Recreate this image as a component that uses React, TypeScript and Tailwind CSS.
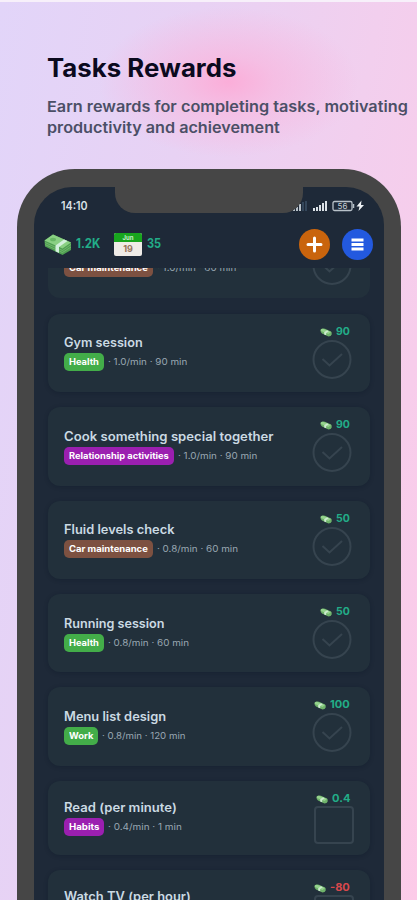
import React from 'react';
import clsx from 'clsx';

interface Task {
  title: string;
  titleClass: string;
  tag: string;
  tagClass: string;
  rate: string;
  rateClass: string;
  reward: string;
  rewardClass: string;
  card: string;
  shape: 'check' | 'box';
}

const tasks: Task[] = [
  { title: 'Gym session', titleClass: 'w-[79px]', tag: 'Health', tagClass: 'w-10 bg-[#43ad49]', rate: '· 1.0/min · 90 min', rateClass: 'w-[79px]', reward: '90', rewardClass: 'w-[14px]', card: 'h-[78px] pt-[20px] mb-[15px]', shape: 'check' },
  { title: 'Cook something special together', titleClass: 'w-[210px]', tag: 'Relationship activities', tagClass: 'w-[110px] bg-[#9b1fb0]', rate: '· 1.0/min · 90 min', rateClass: 'w-[79px]', reward: '90', rewardClass: 'w-[14px]', card: 'h-[79px] pt-[21px] mb-[15px]', shape: 'check' },
  { title: 'Fluid levels check', titleClass: 'w-[110px]', tag: 'Car maintenance', tagClass: 'w-[89px] bg-[#7d5141]', rate: '· 0.8/min · 60 min', rateClass: 'w-[81px]', reward: '50', rewardClass: 'w-[14px]', card: 'h-[78px] pt-[20px] mb-[15px]', shape: 'check' },
  { title: 'Running session', titleClass: 'w-[101px]', tag: 'Health', tagClass: 'w-10 bg-[#43ad49]', rate: '· 0.8/min · 60 min', rateClass: 'w-[81px]', reward: '50', rewardClass: 'w-[14px]', card: 'h-[78px] pt-[21px] mb-[15px]', shape: 'check' },
  { title: 'Menu list design', titleClass: 'w-[102px]', tag: 'Work', tagClass: 'w-[34px] bg-[#43ad49]', rate: '· 0.8/min · 120 min', rateClass: 'w-[84px]', reward: '100', rewardClass: 'w-[20px]', card: 'h-[79px] pt-[21px] mb-[15px]', shape: 'check' },
  { title: 'Read (per minute)', titleClass: 'w-[113px]', tag: 'Habits', tagClass: 'w-10 bg-[#9b1fb0]', rate: '· 0.4/min · 1 min', rateClass: 'w-[74px]', reward: '0.4', rewardClass: 'w-[18px]', card: 'h-[74px] pt-[18px] mb-[15px]', shape: 'box' },
  { title: 'Watch TV (per hour)', titleClass: 'w-[127px]', tag: 'Habits', tagClass: 'w-10 bg-[#9b1fb0]', rate: '· 0.4/min · 60 min', rateClass: 'w-[81px]', reward: '-80', rewardClass: 'w-[20px]', card: 'h-[78px] pt-[18px]', shape: 'box' },
];

// Stretches a line of text over the full width of its box
function Fit({ text, className }: { text: string; className: string }) {
  const ref = React.useRef<HTMLSpanElement>(null);
  const [scale, setScale] = React.useState(1);

  React.useLayoutEffect(() => {
    const el = ref.current;
    if (el && el.parentElement) {
      setScale(el.parentElement.clientWidth / el.offsetWidth);
    }
  }, [text]);

  return (
    <span className={clsx('block whitespace-nowrap', className)}>
      <span ref={ref} className="inline-block origin-left" style={{ transform: `scaleX(${scale})` }}>
        {text}
      </span>
    </span>
  );
}

function Cash() {
  return (
    <svg viewBox="0 0 28 23" className="w-7 h-[23px]">
      <path d="M.500 7.500 9 1.500 27 9.500V17L18.500 22 1 13.500Z" fill="#4f9f52" />
      <path d="M.500 7.500 9 1.500 27 9.500 18.500 15.500Z" fill="#8ad083" />
      <path d="M1 9.500 18.500 17.500 27 11.500M1 11.500 18.500 19.500 27 14" stroke="#78bd71" strokeWidth=".8" fill="none" />
      <path d="M11.500 12.500 20 6.500 23.500 8 15 14V20L11.500 18.200Z" fill="#d3f0dc" />
      <ellipse cx="9" cy="6.500" rx="3" ry="1.800" fill="#68b765" />
    </svg>
  );
}

function SmallCash() {
  return (
    <svg viewBox="0 0 12 9" className="w-3 h-[9px]">
      <path d="M.500 2Q.500.500 3 .500L5 .800 11 3.500Q12 4 11.700 6.500 11 8.500 8.500 8.500L2 5.500Q.300 4.500.500 2Z" fill="#6fb36b" />
      <path d="M.700 2Q1 .700 3 .700L11 4 8.500 6 1 3Z" fill="#95d38d" />
      <path d="M4.200 4.200 7 2.300 8.800 3.200 6.200 5V7.300L4.200 6.400Z" fill="#cdebd0" />
    </svg>
  );
}

function Calendar() {
  return (
    <div className="w-7 h-[23px] rounded-[2px] overflow-hidden bg-[#efebe7] text-center font-bold">
      <div className="h-[9px] bg-[#18a51e] text-[#c8edc9] text-[6px] leading-[9px]">Jun</div>
      <div className="text-[9px] leading-[14px] text-[#97735b]">19</div>
    </div>
  );
}

function CheckCircle() {
  return (
    <svg viewBox="0 0 40 40" className="w-10 h-10" fill="none" stroke="#36444f" strokeWidth="2">
      <circle cx="20" cy="19.500" r="18.500" />
      <path d="M10.500 19 17.500 25.500 30 14" />
    </svg>
  );
}

function TaskCard({ task }: { task: Task }) {
  return (
    <div className={clsx('relative rounded-xl bg-[#22303b] pl-4 shadow-[0_1px_4px_rgba(10,20,35,0.3)]', task.card)}>
      <Fit text={task.title} className={clsx('mb-px text-[12.5px] leading-[18px] font-semibold text-[#cbdae3]', task.titleClass)} />
      <div className="flex items-center">
        <div className={clsx('h-[18px] rounded-[5px] px-[5px] text-[9px] leading-[18px] font-bold text-white', task.tagClass)}>
          <Fit text={task.tag} className="w-full" />
        </div>
        <Fit text={task.rate} className={clsx('ml-[4px] text-[9px] leading-[18px] text-[#99a7b2]', task.rateClass)} />
      </div>
      <div className="absolute right-5 top-[11px] flex items-center gap-1">
        <SmallCash />
        <Fit text={task.reward} className={clsx('text-[10.5px] leading-[14px] font-bold', task.rewardClass, task.reward.startsWith('-') ? 'text-[#d8484c]' : 'text-[#22ad88]')} />
      </div>
      {task.shape === 'check' ? (
        <div className="absolute left-[264px] top-[26px]">
          <CheckCircle />
        </div>
      ) : (
        <div className="absolute left-[266px] top-[25px] w-10 h-[38px] rounded-[4px] border-2 border-[#36444f]" />
      )}
    </div>
  );
}

function StatusBar() {
  return (
    <div className="relative h-[38px]">
      <Fit text="14:10" className="absolute left-[27px] top-[11px] w-[27px] text-[11.5px] leading-4 font-semibold text-[#dbe1e7]" />
      <svg viewBox="0 0 74 16" className="absolute left-[259px] top-[11px] w-[74px] h-4">
        <path d="M1 13V11M4 13V9M7 13V6" stroke="#b8c1c9" strokeWidth="2" />
        <path d="M10 13V4M13 13V3" stroke="#34465a" strokeWidth="2" />
        <path d="M21 13V10M24 13V9M27 13V7M30 13V5M33 13V3" stroke="#dbe1e7" strokeWidth="2" />
        <rect x="40" y="3.500" width="19" height="9" rx="1.500" fill="none" stroke="#b8c1c9" strokeWidth="1.300" />
        <path d="M60.500 6V10" stroke="#b8c1c9" strokeWidth="1.500" />
        <text x="49.500" y="11" textAnchor="middle" fontSize="8" fill="#c5ced5">56</text>
        <path d="M68.500 2.500 63.500 8.500H66.500L65.500 13 71 7H68Z" fill="#eef2f5" />
      </svg>
      <div className="absolute left-[81px] -top-px w-[188px] h-[27px] rounded-b-[20px] bg-[#464646]" />
    </div>
  );
}

export default function App() {
  return (
    <div className="w-[417px] h-[900px] overflow-hidden border-t-2 border-[#f7f0fa] bg-[radial-gradient(ellipse_130px_75px_at_228px_80px,#fbaed9_0%,rgba(250,180,220,0.65)_35%,rgba(245,200,230,0)_100%),linear-gradient(100deg,#e2d5f9_0%,#e8d2f4_35%,#f2cfee_66%,#fccbe8_100%)] font-['Inter',sans-serif]">
      <div className="h-[167px] pl-[47px] pt-[50px]">
        <Fit text="Tasks Rewards" className="w-[190px] text-[25px] leading-8 font-bold text-[#0b0a1e]" />
        <div className="mt-[12px] text-[15px] leading-[21px] font-semibold text-[#4b4f66]">
          <Fit text="Earn rewards for completing tasks, motivating" className="w-[361px]" />
          <Fit text="productivity and achievement" className="w-[233px]" />
        </div>
      </div>

      <div className="ml-[17px] w-[384px] h-[780px] rounded-t-[58px] bg-[#464646] px-[17px] pt-[18px]">
        <div className="h-full rounded-t-[38px] overflow-hidden bg-[#1e2938]">
          <StatusBar />

          {/* Balance and actions */}
          <div className="flex items-center h-[43px] pl-[10px] pr-[11px] pb-[4px] text-[12.5px] font-bold text-[#22ad88]">
            <Cash />
            <Fit text="1.2K" className="ml-1 w-6" />
            <div className="ml-[14px]"><Calendar /></div>
            <Fit text="35" className="ml-[5px] w-[14px]" />
            <div className="ml-auto flex gap-3">
              <svg viewBox="0 0 31 31" className="w-[31px] h-[31px]">
                <circle cx="15.500" cy="15.500" r="15.500" fill="#c9640d" />
                <path d="M9 15.500H22M15.500 9V22" stroke="white" strokeWidth="3" strokeLinecap="round" />
              </svg>
              <svg viewBox="0 0 31 31" className="w-[31px] h-[31px]">
                <circle cx="15.500" cy="15.500" r="15.500" fill="#2359df" />
                <path d="M9.500 11H21.500M9.500 15.500H21.500M9.500 20H21.500" stroke="white" strokeWidth="2.800" />
              </svg>
            </div>
          </div>

          {/* Task list, scrolled under the header */}
          <div className="h-[640px] overflow-hidden px-[14px]">
            <div className="relative -mt-[48px] mb-[16px] h-[78px] rounded-xl bg-[#22303b] pt-[39px] pl-4">
              <div className="flex">
                <div className="h-[18px] w-[89px] rounded-[5px] bg-[#7d5141] px-[5px] text-[9px] leading-[18px] font-bold text-white">
                  <Fit text="Car maintenance" className="w-full" />
                </div>
                <Fit text="· 1.0/min · 60 min" className="ml-[4px] w-[79px] text-[9px] leading-[18px] text-[#99a7b2]" />
              </div>
              <div className="absolute left-[264px] top-[26px]">
                <CheckCircle />
              </div>
            </div>
            {tasks.map((task) => (
              <TaskCard key={task.title} task={task} />
            ))}
          </div>
        </div>
      </div>
    </div>
  );
}
